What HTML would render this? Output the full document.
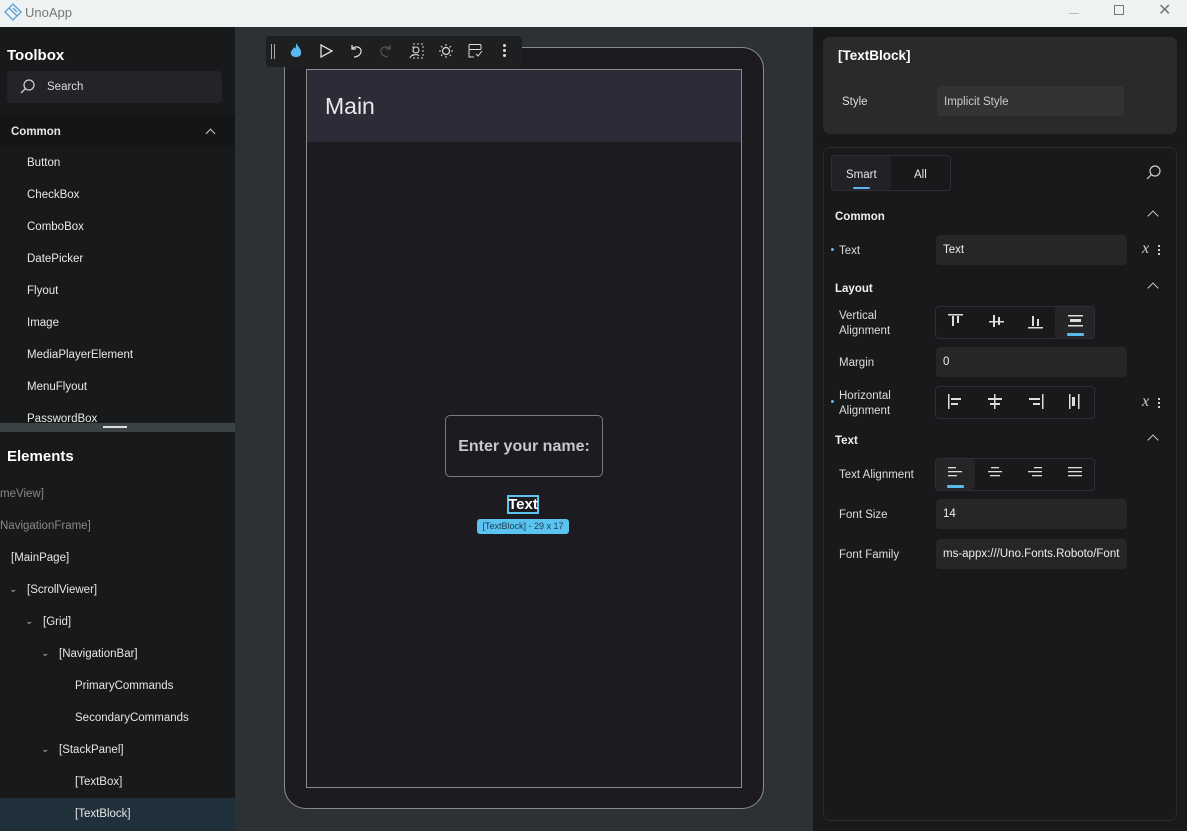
<!DOCTYPE html>
<html><head><meta charset="utf-8"><style>
*{box-sizing:border-box;margin:0;padding:0}
body{width:1187px;height:831px;overflow:hidden;background:#2c3134;font-family:"Liberation Sans",sans-serif;font-size:12px;color:#e6e6e6;position:relative}
.a{position:absolute}
.tb{left:0;top:0;width:1187px;height:27px;background:#eff2f3;color:#777;font-size:13px}
.lp{left:0;top:27px;width:235px;height:804px;background:#18191b}
.rp{left:813px;top:27px;width:374px;height:804px;background:#18191b}
.lp .t{margin-top:2px}
.item{position:absolute;left:27px;font-size:11.5px;color:#e8e8e8;margin-top:1px}
.lbl{position:absolute;left:839px;font-size:11.5px;color:#ddd;margin-top:1px}
.inp{position:absolute;left:936px;width:191px;height:30px;background:#262628;border-radius:4px;padding:9px 7px;font-size:11.5px;color:#eee}
.seg{position:absolute;left:935px;width:160px;height:33px;border:1px solid #2f2f33;border-radius:4px}
.sec{position:absolute;left:835px;font-weight:bold;font-size:11.5px;color:#f0f0f0;margin-top:1px}
.chev{position:absolute;left:1149px;width:8px;height:8px;border-left:1.5px solid #ccc;border-top:1.5px solid #ccc;transform:rotate(45deg)}
.x{position:absolute;left:1142px;font-family:"Liberation Serif",serif;font-style:italic;font-size:16px;color:#ccc}
.dot{position:absolute;left:831px;width:3px;height:3px;border-radius:50%;background:#5bb8e6}
</style></head><body>
<div class="a tb">
<svg class="a" style="left:4px;top:3px" width="18" height="18" viewBox="0 0 18 18"><g fill="none" stroke="#5b9fd8" stroke-width="1.3"><path d="M9 1 L17 9 L9 17 L1 9Z"/><path d="M5 5 L13 13 M9 5 L13 9"/></g></svg>
<div class="a" style="left:25px;top:5px">UnoApp</div>
<div class="a" style="left:1069px;top:13px;width:10px;height:1px;background:#bbb"></div>
<div class="a" style="left:1114px;top:5px;width:10px;height:10px;border:1px solid #777"></div>
<div class="a" style="left:1158px;top:0px;font-size:16px;color:#777">✕</div>
</div>
<div class="a lp">
<div class="a" style="left:7px;top:20px;font-size:15px;font-weight:bold;color:#fff">Toolbox</div>
<div class="a" style="left:7px;top:44px;width:215px;height:32px;background:#232427;border-radius:4px"></div>
<svg class="a" style="left:19px;top:52px" width="16" height="16"><circle cx="10" cy="6" r="5" fill="none" stroke="#ccc" stroke-width="1.3"/><path d="M6.5 9.5 L2 14" stroke="#ccc" stroke-width="1.3"/></svg>
<div class="a" style="left:47px;top:54px;font-size:11.5px;color:#ddd">Search</div>
<div class="a" style="left:0;top:89px;width:235px;height:31px;background:#141517"></div>
<div class="a" style="left:11px;top:99px;font-weight:bold;font-size:11.5px">Common</div>
<div class="a" style="left:207px;top:103px;width:7px;height:7px;border-left:1.5px solid #ccc;border-top:1.5px solid #ccc;transform:rotate(45deg)"></div>
<div class="item" style="top:129px">Button</div>
<div class="item" style="top:161px">CheckBox</div>
<div class="item" style="top:193px">ComboBox</div>
<div class="item" style="top:225px">DatePicker</div>
<div class="item" style="top:257px">Flyout</div>
<div class="item" style="top:289px">Image</div>
<div class="item" style="top:321px">MediaPlayerElement</div>
<div class="item" style="top:353px">MenuFlyout</div>
<div class="item" style="top:385px">PasswordBox</div>
<div class="a" style="left:0;top:396px;width:235px;height:9px;background:#3b4345"></div>
<div class="a" style="left:103px;top:399px;width:24px;height:2px;background:#ddd"></div>
<div class="a" style="left:7px;top:421px;font-size:15px;font-weight:bold;color:#fff">Elements</div>
<div class="a" style="left:0;top:461px;font-size:11.5px;color:#888">meView]</div>
<div class="a" style="left:0;top:493px;font-size:11.5px;color:#888">NavigationFrame]</div>
<div class="a" style="left:11px;top:525px;font-size:11.5px">[MainPage]</div>
<div class="a" style="left:9px;top:557px;font-size:10px;color:#aaa">⌄</div><div class="a" style="left:27px;top:557px;font-size:11.5px">[ScrollViewer]</div>
<div class="a" style="left:25px;top:589px;font-size:10px;color:#aaa">⌄</div><div class="a" style="left:43px;top:589px;font-size:11.5px">[Grid]</div>
<div class="a" style="left:41px;top:621px;font-size:10px;color:#aaa">⌄</div><div class="a" style="left:59px;top:621px;font-size:11.5px">[NavigationBar]</div>
<div class="a" style="left:75px;top:653px;font-size:11.5px">PrimaryCommands</div>
<div class="a" style="left:75px;top:685px;font-size:11.5px">SecondaryCommands</div>
<div class="a" style="left:41px;top:717px;font-size:10px;color:#aaa">⌄</div><div class="a" style="left:59px;top:717px;font-size:11.5px">[StackPanel]</div>
<div class="a" style="left:75px;top:749px;font-size:11.5px">[TextBox]</div>
<div class="a" style="left:0;top:771px;width:235px;height:33px;background:#20303a"></div>
<div class="a" style="left:75px;top:781px;font-size:11.5px">[TextBlock]</div>
</div>
<!-- canvas -->
<div class="a" style="left:284px;top:47px;width:480px;height:762px;border:1px solid #8a8a8a;border-radius:22px;background:#1c1c20"></div>
<div class="a" style="left:306px;top:69px;width:436px;height:719px;border:1px solid #8a8a8a;background:#1c1c20"></div>
<div class="a" style="left:307px;top:70px;width:434px;height:72px;background:#2e2b38"></div>
<div class="a" style="left:325px;top:93px;font-size:23px;color:#e8e8e8">Main</div>
<div class="a" style="left:445px;top:415px;width:158px;height:62px;border:1px solid #7a7a7e;border-radius:5px"></div>
<div class="a" style="left:445px;top:438px;width:158px;text-align:center;font-size:16px;font-weight:bold;color:#c8c8c8">Enter your name:</div>
<div class="a" style="left:507px;top:495px;width:32px;height:19px;border:2px solid #5bc3f0"></div>
<div class="a" style="left:507px;top:496px;width:32px;text-align:center;font-size:15px;font-weight:bold;color:#fff">Text</div>
<div class="a" style="left:477px;top:519px;width:92px;height:15px;background:#5bc3f0;border-radius:3px;font-size:9px;color:#1a3a50;text-align:center;line-height:15px">[TextBlock] - 29 x 17</div>
<!-- toolbar -->
<div class="a" style="left:266px;top:36px;width:256px;height:31px;background:#1e1f21;border-radius:4px"></div>
<div class="a" style="left:271px;top:44px;width:1px;height:15px;background:#aaa"></div><div class="a" style="left:274px;top:44px;width:1px;height:15px;background:#aaa"></div>
<svg class="a" style="left:288px;top:42px" width="16" height="18"><path d="M8 1 C10 5 14 7 13 12 C12 16 4 16 3 12 C2 9 5 8 6 5 C7 7 8 8 8 1Z" fill="#5bb8ef"/></svg>
<svg class="a" style="left:318px;top:43px" width="16" height="16"><path d="M3 2 L14 8 L3 14Z" fill="none" stroke="#ddd" stroke-width="1.3"/></svg>
<svg class="a" style="left:348px;top:43px" width="16" height="16"><path d="M4 2 V6 H8 M4 6 C7 2 14 4 13 9 C12 13 8 14 6 14" fill="none" stroke="#ddd" stroke-width="1.3"/></svg>
<svg class="a" style="left:378px;top:43px" width="16" height="16"><path d="M12 2 V6 H8 M12 6 C9 2 2 4 3 9 C4 13 8 14 10 14" fill="none" stroke="#555" stroke-width="1.3"/></svg>
<svg class="a" style="left:408px;top:43px" width="16" height="16"><rect x="5" y="1" width="10" height="14" fill="none" stroke="#ccc" stroke-dasharray="2 2"/><circle cx="8" cy="7" r="3" fill="none" stroke="#ddd"/><path d="M2 15 C3 11 10 11 11 13" fill="none" stroke="#ddd"/></svg>
<svg class="a" style="left:438px;top:43px" width="16" height="16"><circle cx="8" cy="8" r="3.5" fill="none" stroke="#ddd" stroke-width="1.2"/><path d="M8 1v2M8 13v2M1 8h2M13 8h2M3 3l1.4 1.4M11.6 11.6L13 13M3 13l1.4-1.4M11.6 4.4L13 3" stroke="#ddd"/></svg>
<svg class="a" style="left:467px;top:43px" width="16" height="16"><rect x="2" y="1.5" width="12" height="5" rx="1" fill="none" stroke="#ddd"/><path d="M2 7 V14 H7 M9 11 L11 13 L15 8" fill="none" stroke="#ddd"/></svg>
<div class="a" style="left:503px;top:44px;width:3px;height:3px;border-radius:50%;background:#ddd;box-shadow:0 5px 0 #ddd,0 10px 0 #ddd"></div>
<!-- right -->
<div class="a rp"></div>
<div class="a" style="left:823px;top:37px;width:354px;height:97px;background:#2a2a2b;border-radius:7px"></div>
<div class="a" style="left:838px;top:48px;font-size:13.5px;font-weight:bold;color:#fff">[TextBlock]</div>
<div class="a" style="left:842px;top:96px;font-size:11.5px;color:#ddd">Style</div>
<div class="a" style="left:937px;top:86px;width:187px;height:30px;background:#333335;border-radius:3px;padding:10px 7px;font-size:11.5px;color:#ccc">Implicit Style</div>
<div class="a" style="left:823px;top:147px;width:354px;height:674px;border:1px solid #2a2a2c;border-radius:7px"></div>
<div class="a" style="left:831px;top:155px;width:120px;height:36px;border:1px solid #2f2f33;border-radius:4px"></div>
<div class="a" style="left:832px;top:156px;width:59px;height:34px;background:#222226;border-radius:3px"></div>
<div class="a" style="left:846px;top:169px;font-size:11.5px">Smart</div>
<div class="a" style="left:853px;top:187px;width:17px;height:2px;background:#5bb8e6;border-radius:1px"></div>
<div class="a" style="left:914px;top:169px;font-size:11.5px">All</div>
<svg class="a" style="left:1145px;top:165px" width="16" height="16"><circle cx="10" cy="6" r="5" fill="none" stroke="#ccc" stroke-width="1.2"/><path d="M6.5 9.5 L2 14" stroke="#ccc" stroke-width="1.2"/></svg>
<div class="sec" style="top:210px">Common</div><div class="chev" style="top:212px"></div>
<div class="dot" style="top:248px"></div><div class="lbl" style="top:244px">Text</div>
<div class="inp" style="top:235px">Text</div>
<div class="x" style="top:240px">x</div><div class="a" style="left:1158px;top:245px;width:2px;height:2px;background:#ccc;box-shadow:0 4px 0 #ccc,0 8px 0 #ccc"></div>
<div class="sec" style="top:282px">Layout</div><div class="chev" style="top:284px"></div>
<div class="lbl" style="top:308px;line-height:15px">Vertical<br>Alignment</div>
<div class="seg" style="top:306px"></div>
<div class="a" style="left:1055px;top:307px;width:39px;height:31px;background:#252528;border-radius:3px"></div>
<svg class="a" style="left:945px;top:312px" width="140" height="22" fill="#ddd"><rect x="3" y="2" width="15" height="1.5"/><rect x="7" y="4" width="2" height="10"/><rect x="12" y="4" width="2" height="7"/>
<rect x="44" y="9" width="15" height="1.5"/><rect x="48" y="3" width="2" height="12"/><rect x="53" y="5" width="2" height="8"/>
<rect x="83" y="15" width="15" height="1.5"/><rect x="87" y="4" width="2" height="10"/><rect x="92" y="7" width="2" height="7"/>
<rect x="123" y="3" width="15" height="1.5"/><rect x="125" y="7" width="11" height="3"/><rect x="123" y="13" width="15" height="1.5"/></svg>
<div class="a" style="left:1067px;top:333px;width:17px;height:3px;background:#5bb8e6;border-radius:1px"></div>
<div class="lbl" style="top:356px">Margin</div>
<div class="inp" style="top:347px">0</div>
<div class="dot" style="top:400px"></div>
<div class="lbl" style="top:388px;line-height:15px">Horizontal<br>Alignment</div>
<div class="seg" style="top:386px"></div>
<svg class="a" style="left:945px;top:392px" width="140" height="22" fill="#ddd"><rect x="3" y="2" width="1.5" height="15"/><rect x="6" y="6" width="10" height="2"/><rect x="6" y="11" width="7" height="2"/>
<rect x="49" y="2" width="1.5" height="15"/><rect x="43" y="6" width="14" height="2"/><rect x="45" y="11" width="10" height="2"/>
<rect x="97" y="2" width="1.5" height="15"/><rect x="84" y="6" width="11" height="2"/><rect x="88" y="11" width="7" height="2"/>
<rect x="124" y="2" width="1.5" height="15"/><rect x="127" y="5" width="3" height="9"/><rect x="133" y="2" width="1.5" height="15"/></svg>
<div class="x" style="top:393px">x</div><div class="a" style="left:1158px;top:398px;width:2px;height:2px;background:#ccc;box-shadow:0 4px 0 #ccc,0 8px 0 #ccc"></div>
<div class="sec" style="top:434px">Text</div><div class="chev" style="top:436px"></div>
<div class="lbl" style="top:468px">Text Alignment</div>
<div class="seg" style="top:458px"></div>
<div class="a" style="left:936px;top:459px;width:39px;height:31px;background:#252528;border-radius:3px"></div>
<svg class="a" style="left:945px;top:464px" width="140" height="22" fill="#ddd"><rect x="3" y="3" width="8" height="1.3"/><rect x="3" y="7" width="14" height="1.3"/><rect x="3" y="11" width="9" height="1.3"/>
<rect x="46" y="3" width="8" height="1.3"/><rect x="43" y="7" width="14" height="1.3"/><rect x="45" y="11" width="10" height="1.3"/>
<rect x="89" y="3" width="8" height="1.3"/><rect x="83" y="7" width="14" height="1.3"/><rect x="87" y="11" width="10" height="1.3"/>
<rect x="123" y="3" width="14" height="1.3"/><rect x="123" y="7" width="14" height="1.3"/><rect x="123" y="11" width="14" height="1.3"/></svg>
<div class="a" style="left:947px;top:485px;width:17px;height:3px;background:#5bb8e6;border-radius:1px"></div>
<div class="lbl" style="top:508px">Font Size</div>
<div class="inp" style="top:499px">14</div>
<div class="lbl" style="top:548px">Font Family</div>
<div class="inp" style="top:539px;overflow:hidden;white-space:nowrap">ms-appx:///Uno.Fonts.Roboto/Font</div>
</body></html>
